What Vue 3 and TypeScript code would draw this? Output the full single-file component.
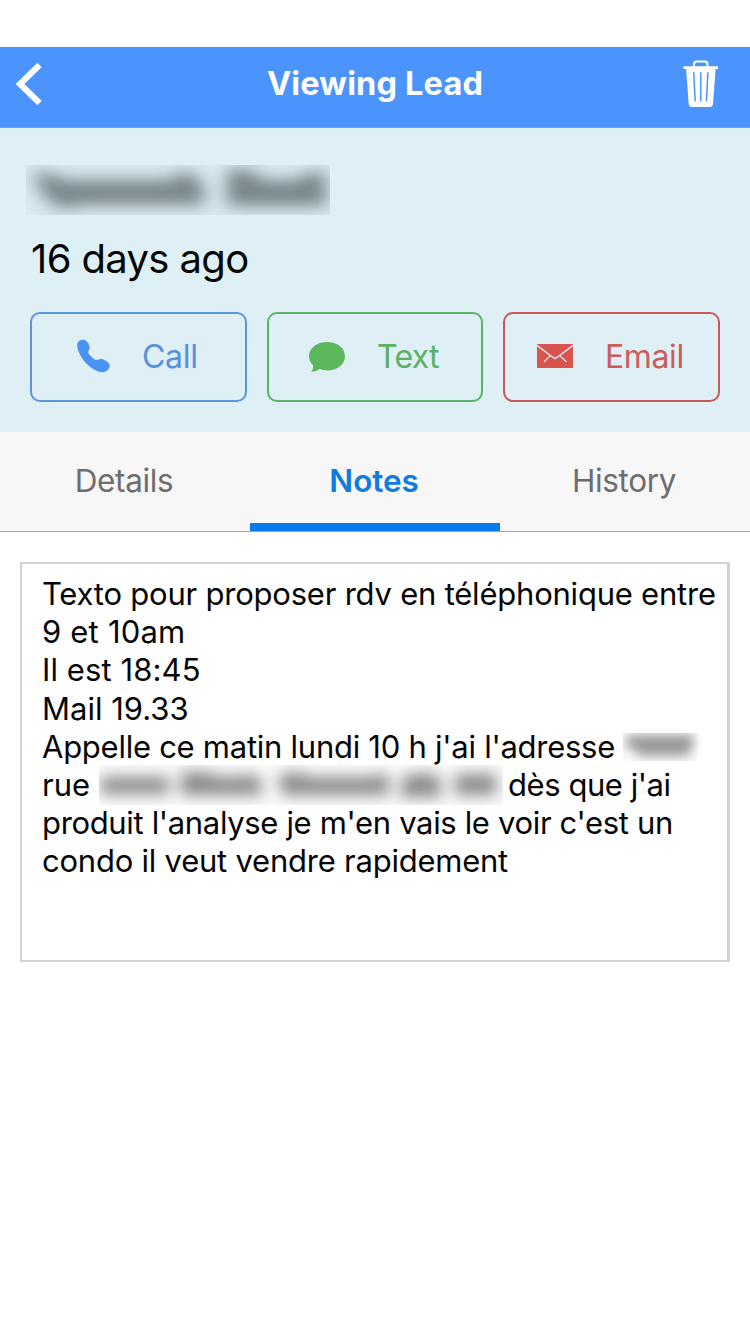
<script setup lang="ts">
import { ref } from 'vue'

interface Tab {
  id: string
  label: string
}

const tabs: Tab[] = [
  { id: 'details', label: 'Details' },
  { id: 'notes', label: 'Notes' },
  { id: 'history', label: 'History' },
]
const activeTab = ref('notes')
</script>

<template>
  <div class="screen">
    <header class="navbar">
      <button class="back" aria-label="Back">
        <svg width="28" height="44" viewBox="0 0 28 44">
          <path d="M24.5 3 L5 22 L24.5 41" fill="none" stroke="#fff" stroke-width="6" />
        </svg>
      </button>
      <h1 class="title">Viewing Lead</h1>
      <button class="trash" aria-label="Delete">
        <svg width="36" height="48" viewBox="0 0 36 48">
          <path d="M11 7 V4.2 Q11 1.5 13.7 1.5 H21.8 Q24.5 1.5 24.5 4.2 V7" fill="none" stroke="#fff" stroke-width="2" />
          <path d="M0.5 6.3 H35 V9 H32.6 L30 44 Q29.7 47 26.7 47 H9 Q6 47 5.7 44 L3.1 9 H0.5 Z" fill="#fff" />
          <path d="M10.7 12.2 L12.2 41.5 M17.8 12.2 V41.5 M24.9 12.2 L23.4 41.5" fill="none" stroke="#4b94fe" stroke-width="1.5" />
        </svg>
      </button>
    </header>

    <section class="lead">
      <svg class="hidden-name" width="304" height="50" viewBox="0 0 304 50" aria-hidden="true">
        <defs>
          <filter id="soft-name" x="-20%" y="-80%" width="140%" height="260%" color-interpolation-filters="sRGB">
            <feGaussianBlur stdDeviation="9 8" />
          </filter>
        </defs>
        <rect width="304" height="50" fill="#cbdbe0" opacity="0.3" />
        <g filter="url(#soft-name)" fill="#566267">
          <path d="M6 8 H24 L38 15 H148 V8 H164 L178 19 V40 H56 L36 44 L20 34 Z" opacity="0.74" />
          <path d="M201 5 H226 L236 15 H276 V8 H300 V41 H201 Z" opacity="0.74" />
        </g>
      </svg>
      <p class="age">16 days ago</p>
      <div class="actions">
        <button class="action call">
          <svg class="icon" width="36" height="36" viewBox="0 0 36 36">
            <path d="M2.2 7.6 C2 3.5 5.2 1.2 8.5 1.7 C11.8 2.1 14.4 6.2 14.6 9.3 C14.8 11.5 13.2 12.7 13.2 14.3 C13.2 16.2 19 22 21.1 22 C22.9 22 24 20.7 26.3 21 C29.4 21.4 34.4 24.3 34.7 27.3 C35.2 30.8 31.5 34.2 27.5 34.2 C16.5 34.2 2.7 18.6 2.2 7.6 Z" fill="#4a92f3" />
          </svg>
          <span>Call</span>
        </button>
        <button class="action text">
          <svg class="icon" width="36" height="36" viewBox="0 0 36 36">
            <path d="M18 3 C28 3 36 9 36 17.2 C36 25.5 28 31.5 18 31.5 C15.3 31.5 12.9 31 10.6 30.1 C8.2 32 5.4 32.8 2.1 32.9 C3.7 31 4.4 29 4.2 26.4 C1.6 24 0 20.8 0 17.2 C0 9 8 3 18 3 Z" fill="#5cb85c" />
          </svg>
          <span>Text</span>
        </button>
        <button class="action email">
          <svg class="icon" width="36" height="36" viewBox="0 0 36 36">
            <rect y="6" width="36" height="24" rx="0.6" fill="#d9534f" />
            <path d="M0 7.4 L13.3 17.5 L18 20.7 L22.7 17.5 L36 7.4" fill="none" stroke="#e0eef4" stroke-width="1.5" />
            <path d="M13.5 17.3 L7 24 M22.5 17.3 L29.5 24" fill="none" stroke="#e0eef4" stroke-width="1.1" />
          </svg>
          <span>Email</span>
        </button>
      </div>
    </section>

    <nav class="tabs">
      <button
        v-for="tab in tabs"
        :key="tab.id"
        class="tab"
        :class="[tab.id, { active: tab.id === activeTab }]"
        @click="activeTab = tab.id"
      >
        <span>{{ tab.label }}</span>
      </button>
    </nav>

    <main class="note">
      <p class="line l1">Texto pour proposer rdv en téléphonique entre</p>
      <p class="line l2">9 et 10am</p>
      <p class="line l3">Il est 18:45</p>
      <p class="line l4">Mail 19.33</p>
      <p class="line l5">
        <span>Appelle ce matin lundi 10 h j'ai l'adresse</span>
        <svg class="hidden-number" width="78" height="28" viewBox="0 0 78 28" aria-hidden="true">
          <defs>
            <filter id="soft-number" x="-20%" y="-60%" width="140%" height="220%" color-interpolation-filters="sRGB">
              <feGaussianBlur stdDeviation="5.2" />
            </filter>
          </defs>
          <rect width="74" height="28" fill="#e9e9e9" opacity="0.25" />
          <g filter="url(#soft-number)" fill="#555">
            <path d="M3 4 L12 2 H70 V14 L64 23 H17 L13 17 L4 15 Z" opacity="0.58" />
          </g>
        </svg>
      </p>
      <p class="line l6">
        <span>rue</span>
        <svg class="hidden-street" width="404" height="40" viewBox="0 0 404 40" aria-hidden="true">
          <defs>
            <filter id="soft-street" x="-10%" y="-100%" width="120%" height="300%" color-interpolation-filters="sRGB">
              <feGaussianBlur stdDeviation="7.2" />
            </filter>
          </defs>
          <rect width="404" height="40" fill="#e5e5e5" opacity="0.2" />
          <g filter="url(#soft-street)" fill="#444" opacity="0.62">
            <path d="M2 12 H70 V29 H2 Z" />
            <path d="M82 7 H106 L122 12 L160 10 L164 30 H82 Z" />
            <path d="M179 10 L200 7 L210 12 H266 L290 9 V30 H183 Z" />
            <path d="M304 11 L326 8 L342 13 V32 H301 Z" />
            <path d="M356 9 H397 V30 H356 Z" />
          </g>
        </svg>
        <span class="after">dès que j'ai</span>
      </p>
      <p class="line l7">produit l'analyse je m'en vais le voir c'est un</p>
      <p class="line l8">condo il veut vendre rapidement</p>
    </main>
  </div>
</template>

<style>
html,
body {
  background: #fff;
}
</style>

<style scoped>
.screen {
  box-sizing: border-box;
  width: 750px;
  height: 1334px;
  padding-top: 47px;
  overflow: hidden;
  background: #fff;
  color: #050505;
  font-family: Inter, 'Liberation Sans', sans-serif;
}
button {
  margin: 0;
  padding: 0;
  border: 0;
  background: none;
  color: inherit;
  font: inherit;
}
svg {
  display: block;
  flex: none;
}
p,
h1 {
  margin: 0;
  font-weight: 400;
}
.navbar {
  box-sizing: border-box;
  display: grid;
  grid-template-columns: 60px 1fr 60px;
  align-items: center;
  height: 81px;
  padding: 0 15px;
  border-bottom: 1px solid #7a9fcc;
  background: #4b94fe;
}
.back svg {
  margin-top: -6px;
}
.title {
  padding-bottom: 7px;
  color: #fff;
  font-size: 32.5px;
  font-weight: 700;
  letter-spacing: 0.15px;
  line-height: 40px;
  text-align: center;
  white-space: nowrap;
}
.trash {
  display: flex;
  justify-content: flex-end;
  padding: 0 16px 6px 0;
}
.lead {
  box-sizing: border-box;
  height: 304px;
  padding: 37px 30px 30px;
  background: #deeff5;
}
.hidden-name {
  margin-left: -4px;
  overflow: hidden;
}
.age {
  margin: 19px 0 0 1px;
  font-size: 40px;
  letter-spacing: -0.64px;
  line-height: 50px;
  white-space: nowrap;
}
.actions {
  display: grid;
  grid-template-columns: 217px 216px 217px;
  gap: 20px;
  margin-top: 28px;
}
.action {
  box-sizing: border-box;
  display: flex;
  align-items: center;
  height: 90px;
  border: 2px solid;
  border-radius: 10px;
  font-size: 32px;
  line-height: 40px;
}
.action .icon {
  margin: -2px 31px 0 0;
}
.call {
  padding-left: 43px;
  border-color: #5b96d8;
  color: #5591dc;
  letter-spacing: -0.3px;
}
.text {
  padding-left: 40px;
  border-color: #59b368;
  color: #5bb264;
  letter-spacing: -0.7px;
}
.text .icon {
  margin: 0 32px 0 0;
}
.email {
  padding-left: 32px;
  border-color: #c8595a;
  color: #cb5c5b;
  letter-spacing: -0.4px;
}
.email .icon {
  margin-right: 32px;
}
.tabs {
  box-sizing: border-box;
  display: grid;
  grid-template-columns: repeat(3, 1fr);
  height: 100px;
  border-bottom: 1px solid #a3a5a7;
  background: #f7f7f7;
}
.tab {
  box-sizing: border-box;
  padding: 6px 2px 0 0;
  border-bottom: 8px solid transparent;
  color: #6d6d6f;
  font-size: 31.5px;
  letter-spacing: -0.35px;
  line-height: 40px;
}
.tab.active {
  border-color: #067cf0;
  color: #107be0;
  font-weight: 600;
  letter-spacing: -0.1px;
}
.note {
  box-sizing: border-box;
  width: 710px;
  height: 400px;
  margin: 30px 20px 0;
  padding: 11px 0 0 20px;
  border: 2px solid #d1d1d6;
  border-right-width: 3px;
}
.line {
  display: flex;
  align-items: center;
  height: 38.2px;
  font-size: 31px;
  line-height: 38px;
  white-space: nowrap;
}
.l1 {
  letter-spacing: -0.22px;
}
.l2 {
  letter-spacing: 0.2px;
}
.l3 {
  letter-spacing: 0.1px;
}
.l5 {
  letter-spacing: -0.26px;
}
.l7 {
  letter-spacing: -0.34px;
}
.l8 {
  letter-spacing: -0.23px;
}
.hidden-number {
  margin-left: 8px;
}
.hidden-street {
  margin-left: 9px;
}
.after {
  margin-left: 5px;
  letter-spacing: -0.45px;
}
</style>
